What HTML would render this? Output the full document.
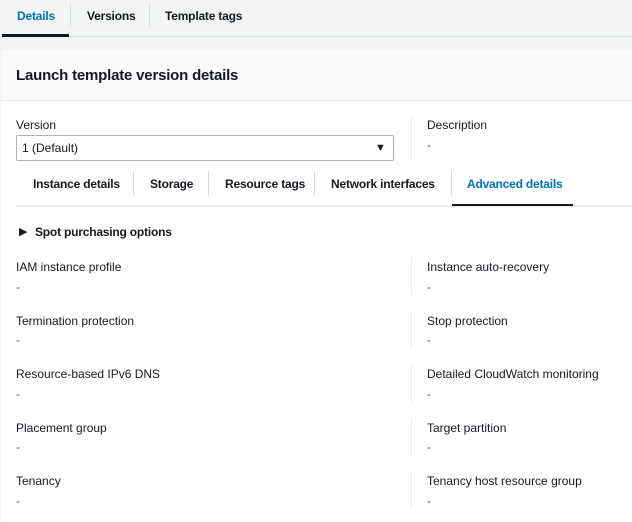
<!DOCTYPE html>
<html><head><style>
*{margin:0;padding:0;box-sizing:border-box}
body{width:632px;height:522px;overflow:hidden;background:#f2f3f3;font-family:"Liberation Sans",Arial,sans-serif;color:#16191f;position:relative;font-size:12px}
.a{position:absolute;white-space:nowrap}
.b{font-weight:bold;letter-spacing:-0.2px}
.sep{position:absolute;width:1px;background:#d5dbdb}
.dash{color:#545b64}
</style></head><body>
<div class="a" style="left:0;top:0;width:632px;height:37px;background:#f2f3f3;border-bottom:1px solid #d5dbdb"></div>
<div class="a b" style="left:17px;top:9px;color:#0073bb">Details</div>
<div class="a" style="left:2px;top:34px;width:67px;height:3px;background:#16191f"></div>
<div class="sep" style="left:70px;top:4px;height:23px"></div>
<div class="a b" style="left:87px;top:9px">Versions</div>
<div class="sep" style="left:149px;top:4px;height:23px"></div>
<div class="a b" style="left:165px;top:9px">Template tags</div>

<div class="a" style="left:1px;top:50px;width:631px;height:472px;background:#fff"></div>
<div class="a" style="left:1px;top:50px;width:631px;height:51px;background:#fafafa;border-bottom:1px solid #eaeded"></div>
<div class="a b" style="left:16px;top:67px;font-size:15px">Launch template version details</div>

<div class="a" style="left:16px;top:118px">Version</div>
<div class="a" style="left:16px;top:135px;width:378px;height:26px;border:1px solid #aab7b8;border-radius:2px;background:#fff"></div>
<div class="a" style="left:22px;top:141px">1 (Default)</div>
<div class="a" style="left:375px;top:142px;font-size:11px">&#9660;</div>
<div class="sep" style="left:411px;top:117px;height:44px;background:#eaeded"></div>
<div class="a" style="left:427px;top:118px">Description</div>
<div class="a dash" style="left:427px;top:138px">-</div>

<div class="a b" style="left:33px;top:177px">Instance details</div>
<div class="sep" style="left:133px;top:171px;height:25px"></div>
<div class="a b" style="left:150px;top:177px">Storage</div>
<div class="sep" style="left:208px;top:171px;height:25px"></div>
<div class="a b" style="left:225px;top:177px">Resource tags</div>
<div class="sep" style="left:314px;top:171px;height:25px"></div>
<div class="a b" style="left:331px;top:177px">Network interfaces</div>
<div class="sep" style="left:451px;top:171px;height:25px"></div>
<div class="a b" style="left:467px;top:177px;color:#0073bb">Advanced details</div>
<div class="a" style="left:16px;top:205px;width:616px;height:2px;background:#eaeded"></div>
<div class="a" style="left:452px;top:204px;width:121px;height:2px;background:#16191f"></div>

<div class="a" style="left:19px;top:225px;font-size:11px">&#9654;</div>
<div class="a b" style="left:35px;top:225px">Spot purchasing options</div>

<div class="a" style="left:16px;top:260px">IAM instance profile</div><div class="a dash" style="left:16px;top:280px">-</div>
<div class="a" style="left:16px;top:314px">Termination protection</div><div class="a dash" style="left:16px;top:333px">-</div>
<div class="a" style="left:16px;top:367px">Resource-based IPv6 DNS</div><div class="a dash" style="left:16px;top:387px">-</div>
<div class="a" style="left:16px;top:421px">Placement group</div><div class="a dash" style="left:16px;top:440px">-</div>
<div class="a" style="left:16px;top:474px">Tenancy</div><div class="a dash" style="left:16px;top:494px">-</div>

<div class="sep" style="left:411px;top:257px;height:38px;background:#eaeded"></div>
<div class="sep" style="left:411px;top:311px;height:38px;background:#eaeded"></div>
<div class="sep" style="left:411px;top:364px;height:38px;background:#eaeded"></div>
<div class="sep" style="left:411px;top:418px;height:38px;background:#eaeded"></div>
<div class="sep" style="left:411px;top:471px;height:38px;background:#eaeded"></div>

<div class="a" style="left:427px;top:260px">Instance auto-recovery</div><div class="a dash" style="left:427px;top:280px">-</div>
<div class="a" style="left:427px;top:314px">Stop protection</div><div class="a dash" style="left:427px;top:333px">-</div>
<div class="a" style="left:427px;top:367px">Detailed CloudWatch monitoring</div><div class="a dash" style="left:427px;top:387px">-</div>
<div class="a" style="left:427px;top:421px">Target partition</div><div class="a dash" style="left:427px;top:440px">-</div>
<div class="a" style="left:427px;top:474px">Tenancy host resource group</div><div class="a dash" style="left:427px;top:494px">-</div>
</body></html>
